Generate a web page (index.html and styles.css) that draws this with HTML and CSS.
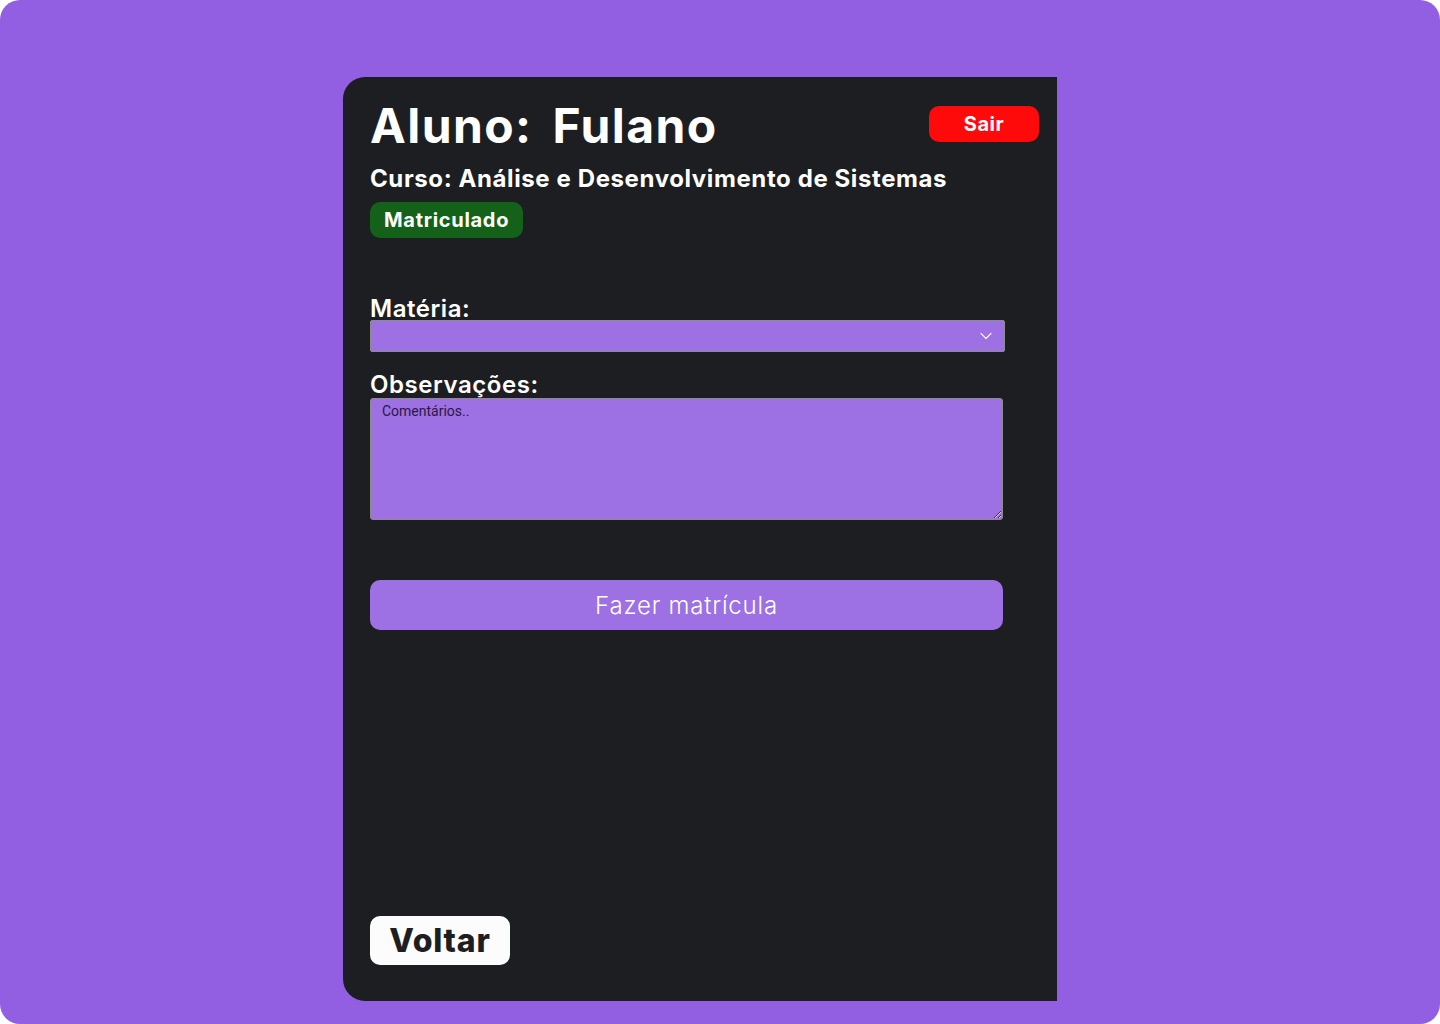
FILE: index.html
```html
<!DOCTYPE html>
<html lang="pt-BR">
<head>
<meta charset="utf-8">
<title>Aluno</title>
<link rel="stylesheet" href="styles.css">
</head>
<body>
<div class="frame">
  <main class="card">
    <header class="head">
      <h1 class="title"><span>Aluno:</span><span>Fulano</span></h1>
      <button class="btn-sair" type="button">Sair</button>
    </header>
    <p class="curso">Curso: Análise e Desenvolvimento de Sistemas</p>
    <span class="badge">Matriculado</span>

    <form class="form">
      <label class="label" for="materia">Matéria:</label>
      <div class="select-wrap">
        <select id="materia" class="select"></select>
        <svg class="chev" width="12" height="8" viewBox="0 0 12 8" fill="none" stroke="#f2f2f2" stroke-width="1.2" stroke-linecap="round" stroke-linejoin="round"><path d="M1 1.5 L6 6.5 L11 1.5"/></svg>
      </div>
      <label class="label label-obs" for="obs">Observações:</label>
      <textarea id="obs" class="textarea" placeholder="Comentários.."></textarea>
      <button class="btn-main" type="button">Fazer matrícula</button>
    </form>

    <button class="btn-voltar" type="button">Voltar</button>
  </main>
</div>
</body>
</html>
```

FILE: styles.css
```css
* { box-sizing: border-box; }
html, body { margin: 0; padding: 0; background: #ffffff; }
body { width: 1440px; height: 1024px; overflow: hidden; }

.frame {
  width: 1440px;
  height: 1024px;
  background: #925fe2;
  border-radius: 20px;
  padding-top: 77px;
  padding-left: 343px;
}

.card {
  width: 714px;
  height: 924px;
  background: #1d1e21;
  border-radius: 22px 0 0 22px;
  padding: 21px 18px 36px 27px;
  display: flex;
  flex-direction: column;
  align-items: flex-start;
  font-family: Inter, "Noto Sans", sans-serif;
  color: #ffffff;
}

.head {
  width: 100%;
  display: flex;
  justify-content: space-between;
  align-items: flex-start;
}

.title {
  margin: 0;
  font-size: 48px;
  line-height: 56px;
  font-weight: 700;
  display: flex;
  gap: 20px;
  letter-spacing: 1.4px;
}

.btn-sair {
  margin-top: 8px;
  width: 110px;
  height: 36px;
  border: none;
  border-radius: 10px;
  background: #ff0a0a;
  color: #ffffff;
  font-family: Inter, sans-serif;
  font-weight: 700;
  font-size: 20px;
  letter-spacing: 0.5px;
  padding: 0;
}

.curso {
  margin: 10px 0 0 0;
  font-size: 24px;
  line-height: 30px;
  font-weight: 700;
  letter-spacing: 0.6px;
}

.badge {
  margin-top: 8px;
  height: 36px;
  padding: 0 14px;
  border-radius: 10px;
  background: #146119;
  font-size: 20px;
  font-weight: 700;
  line-height: 36px;
  letter-spacing: 0.7px;
}

.form {
  width: 635px;
  margin-top: 56px;
  display: flex;
  flex-direction: column;
}

.label {
  font-size: 24px;
  font-weight: 600;
  line-height: 22px;
  padding-top: 4px;
  letter-spacing: 0.55px;
}

.label-obs { margin-top: 18px; }

.select-wrap {
  position: relative;
  width: 635px;
  height: 32px;
}

.select {
  appearance: none;
  -webkit-appearance: none;
  width: 100%;
  height: 32px;
  margin: 0;
  background: #9d70e3;
  border: 1px solid #8c8c8c;
  border-radius: 2px;
}

.chev {
  position: absolute;
  right: 13px;
  top: 12px;
}

.textarea {
  margin-top: 2px;
  width: 633px;
  height: 122px;
  background: #9d70e3;
  border: 1px solid #8c8c8c;
  border-radius: 3px;
  padding: 4px 11px;
  font-family: Roboto, sans-serif;
  font-size: 14px;
  color: #2a1845;
}
.textarea::placeholder { color: #2a1845; opacity: 1; }

.btn-main {
  margin-top: 60px;
  width: 633px;
  height: 50px;
  border: none;
  border-radius: 10px;
  background: #9d70e3;
  color: #ffffff;
  font-family: Inter, sans-serif;
  font-weight: 300;
  font-size: 24px;
  letter-spacing: 0.8px;
  padding: 0;
}

.btn-voltar {
  margin-top: auto;
  width: 140px;
  height: 49px;
  border: none;
  border-radius: 10px;
  background: #fcfcfc;
  color: #1d1e21;
  font-family: Inter, sans-serif;
  font-weight: 800;
  font-size: 32px;
  letter-spacing: 0.8px;
  padding: 0;
}
```
